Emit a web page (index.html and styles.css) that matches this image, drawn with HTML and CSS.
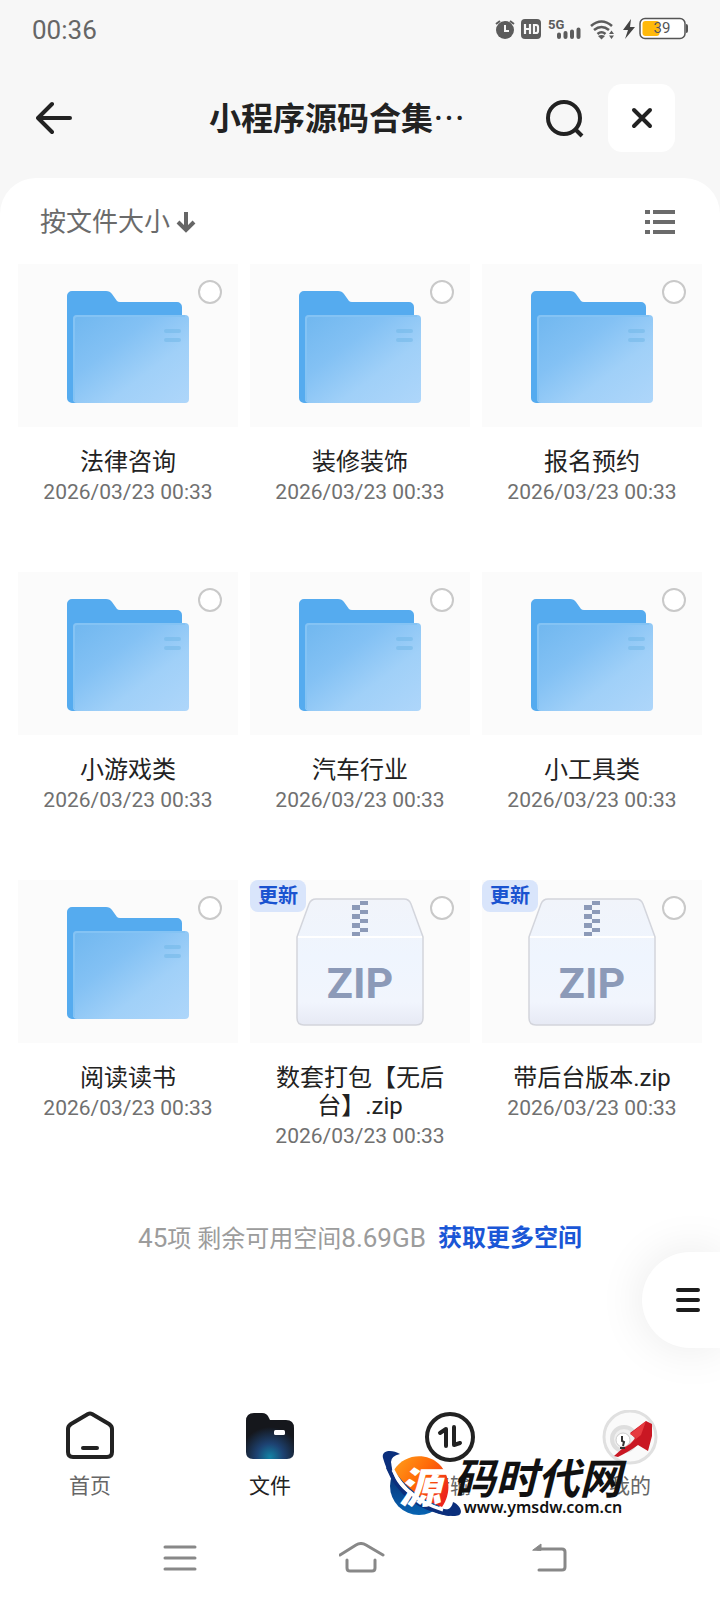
FILE: index.html
```html
<!DOCTYPE html>
<html lang="zh-CN">
<head>
<meta charset="utf-8">
<meta name="viewport" content="width=device-width">
<title>小程序源码合集</title>
<link rel="stylesheet" href="styles.css">
</head>
<body>
<svg class="defs" aria-hidden="true">
  <defs>
    <linearGradient id="front" x1="0" y1="0" x2="1" y2="1">
      <stop offset="0" stop-color="#70b7ef"/><stop offset=".35" stop-color="#83c1f4"/><stop offset=".65" stop-color="#a0d0f8"/><stop offset="1" stop-color="#aed6fa"/>
    </linearGradient>
    <linearGradient id="box" x1="0" y1="0" x2="0" y2="1">
      <stop offset="0" stop-color="#f1f4fa"/><stop offset=".45" stop-color="#eff5fe"/><stop offset=".82" stop-color="#f1f5fd"/><stop offset="1" stop-color="#e6e9f4"/>
    </linearGradient>
    <symbol id="folder" viewBox="0 0 128 128">
      <path d="M3 14a5 5 0 0 1 5-5h34q4 0 6 3l5 7q1 1 3 1h57a5 5 0 0 1 5 5v30H20v66H8a5 5 0 0 1-5-5z" fill="#55abef"/>
      <rect x="9" y="33" width="116" height="88" rx="4" fill="url(#front)"/>
      <path d="M10 119V37q0-3 3-3h108" fill="none" stroke="#84c3f4" stroke-width="2"/>
      <path d="M102 49h13M102 58h13" stroke="#72b8e8" stroke-width="4" stroke-linecap="round" opacity=".55"/>
    </symbol>
    <symbol id="zip" viewBox="0 0 128 128">
      <path d="M1 39 13 6q2-5 7-5h88q5 0 7 5l12 33v81q0 7-7 7H8q-7 0-7-7z" fill="url(#box)" stroke="#d3d5dc" stroke-width="1.5"/>
      <path d="M2 39h124" stroke="#fff" stroke-width="2"/>
      <path d="M64 3h8v4h-8zM56 7h8v5h-8zM64 12h8v4h-8zM56 16h8v5h-8zM64 21h8v4h-8zM56 25h8v5h-8zM64 30h8v4h-8zM56 34h8v4h-8z" fill="#8c9ab8"/>
      <text x="64" y="100" text-anchor="middle" class="zip-text">ZIP</text>
    </symbol>
  </defs>
</svg>

<div class="status">
  <time class="clock">00:36</time>
  <svg class="status-icons" viewBox="0 0 220 40" aria-hidden="true">
    <circle cx="25" cy="20" r="9" fill="#5c5c5c"/>
    <path d="m16 14 4-3M34 14l-4-3" stroke="#5c5c5c" stroke-width="2"/>
    <path d="M25 15v6h4" fill="none" stroke="#f7f7f7" stroke-width="2"/>
    <rect x="41" y="9" width="20" height="20" rx="4" fill="#5c5c5c"/>
    <path d="M45 14v10M50 14v10M45 19h5M54 15h2q2 0 2 2v4q0 2-2 2h-2z" fill="none" stroke="#f7f7f7" stroke-width="2.2"/>
    <text x="68" y="19" class="net">5G</text>
    <path d="M79 24.500v2.500M85.500 23v4M92 21.500v5.500M98.500 19.500v7.500" stroke="#5c5c5c" stroke-width="4" stroke-linecap="round"/>
    <path d="M111 16q10.500-9 21 0M114 20q7.500-6 15 0M117.500 24q4-3.500 8 0" fill="none" stroke="#5c5c5c" stroke-width="2.600"/>
    <path d="m118 26 3.500 3.500L125 26q-3.500-2-7 0z" fill="#5c5c5c"/>
    <path d="m129 24 2.500-3.500L134 24zM129 25.500h5l-2.500 3.500z" fill="#5c5c5c"/>
    <path d="m151 9-8 11h5l-3 9 10-12h-5z" fill="#444"/>
    <rect x="160" y="8.500" width="45" height="20" rx="5" fill="#fff" stroke="#555" stroke-width="1.500"/>
    <rect x="162.500" y="11" width="17" height="15" rx="3" fill="#ffb90a"/>
    <path d="M206 14q2 0 2 2v5q0 2-2 2z" fill="#555"/>
    <text x="182" y="23" text-anchor="middle" class="battery">39</text>
  </svg>
</div>

<header class="header">
  <button class="icon-button" type="button" aria-label="返回">
    <svg width="36" height="36" viewBox="0 0 36 36" fill="none" stroke="#222" stroke-width="4" stroke-linecap="round" stroke-linejoin="round"><path d="M34 18H2M16 4 2 18l14 14"/></svg>
  </button>
  <h1 class="title">小程序源码合集<span class="dots">⋯</span></h1>
  <button class="icon-button" type="button" aria-label="搜索">
    <svg width="40" height="40" viewBox="0 0 40 40" fill="none" stroke="#222" stroke-width="4"><circle cx="18" cy="20" r="16"/><path d="m29 31 7 7"/></svg>
  </button>
  <button class="close" type="button" aria-label="关闭">
    <svg width="24" height="24" viewBox="0 0 24 24" fill="none" stroke="#222" stroke-width="4" stroke-linecap="round"><path d="m4 4 16 16M20 4 4 20"/></svg>
  </button>
</header>

<main class="panel">
  <div class="toolbar">
    <button class="sort" type="button">按文件大小
      <svg width="20" height="22" viewBox="0 0 20 22" fill="none" stroke="#666" stroke-width="4"><path d="M10 1v17M2 11l8 8 8-8"/></svg>
    </button>
    <button class="icon-button" type="button" aria-label="列表视图">
      <svg width="30" height="24" viewBox="0 0 30 24" stroke="#6b6b6b" stroke-width="4"><path d="M0 2h5M8 2h22M0 12h5M8 12h22M0 22h5M8 22h22"/></svg>
    </button>
  </div>

  <div class="grid">
    <article class="item"><div class="tile"><svg class="art" aria-hidden="true"><use href="#folder"/></svg><input class="pick" type="checkbox" aria-labelledby="n1"></div><h2 class="name" id="n1">法律咨询</h2><time class="date">2026/03/23 00:33</time></article>
    <article class="item"><div class="tile"><svg class="art" aria-hidden="true"><use href="#folder"/></svg><input class="pick" type="checkbox" aria-labelledby="n2"></div><h2 class="name" id="n2">装修装饰</h2><time class="date">2026/03/23 00:33</time></article>
    <article class="item"><div class="tile"><svg class="art" aria-hidden="true"><use href="#folder"/></svg><input class="pick" type="checkbox" aria-labelledby="n3"></div><h2 class="name" id="n3">报名预约</h2><time class="date">2026/03/23 00:33</time></article>
    <article class="item"><div class="tile"><svg class="art" aria-hidden="true"><use href="#folder"/></svg><input class="pick" type="checkbox" aria-labelledby="n4"></div><h2 class="name" id="n4">小游戏类</h2><time class="date">2026/03/23 00:33</time></article>
    <article class="item"><div class="tile"><svg class="art" aria-hidden="true"><use href="#folder"/></svg><input class="pick" type="checkbox" aria-labelledby="n5"></div><h2 class="name" id="n5">汽车行业</h2><time class="date">2026/03/23 00:33</time></article>
    <article class="item"><div class="tile"><svg class="art" aria-hidden="true"><use href="#folder"/></svg><input class="pick" type="checkbox" aria-labelledby="n6"></div><h2 class="name" id="n6">小工具类</h2><time class="date">2026/03/23 00:33</time></article>
    <article class="item"><div class="tile"><svg class="art" aria-hidden="true"><use href="#folder"/></svg><input class="pick" type="checkbox" aria-labelledby="n7"></div><h2 class="name" id="n7">阅读读书</h2><time class="date">2026/03/23 00:33</time></article>
    <article class="item"><div class="tile"><svg class="art" aria-hidden="true"><use href="#zip"/></svg><span class="tag">更新</span><input class="pick" type="checkbox" aria-labelledby="n8"></div><h2 class="name" id="n8">数套打包【无后台】.zip</h2><time class="date">2026/03/23 00:33</time></article>
    <article class="item"><div class="tile"><svg class="art" aria-hidden="true"><use href="#zip"/></svg><span class="tag">更新</span><input class="pick" type="checkbox" aria-labelledby="n9"></div><h2 class="name" id="n9">带后台版本.zip</h2><time class="date">2026/03/23 00:33</time></article>
  </div>

  <p class="summary"><span><span class="num">45</span>项 剩余可用空间<span class="num">8.69GB</span></span><a class="more" href="#">获取更多空间</a></p>
</main>

<div class="bottom">
  <button class="float" type="button" aria-label="菜单">
    <svg width="24" height="26" viewBox="0 0 24 26" stroke="#1c1c1c" stroke-width="4" stroke-linecap="round"><path d="M2 3h20M2 13h20M2 23h20"/></svg>
  </button>

  <nav class="tabs">
    <a class="tab" href="#">
      <svg width="56" height="56" viewBox="0 0 56 56" fill="none" stroke="#222" stroke-width="4" stroke-linejoin="round" stroke-linecap="round"><path d="M26 4q2-1 4 0l17 10q3 2 3 5v23q0 5-5 5H11q-5 0-5-5V19q0-3 3-5z"/><path d="M21 38h14"/></svg>
      <span>首页</span>
    </a>
    <a class="tab active" href="#" aria-current="page">
      <svg width="56" height="56" viewBox="0 0 56 56"><defs><radialGradient id="glow" gradientUnits="userSpaceOnUse" cx="28" cy="47" r="30"><stop offset="0" stop-color="#1383a5"/><stop offset=".45" stop-color="#1d4272"/><stop offset="1" stop-color="#15171c"/></radialGradient></defs><path d="M4 11q0-8 8-8h8q5 0 7 5l1 2h16q8 0 8 8v24q0 7-7 7H11q-7 0-7-7z" fill="url(#glow)"/><rect x="32" y="20" width="11" height="5" rx="1.500" fill="#fff"/></svg>
      <span>文件</span>
    </a>
    <a class="tab" href="#">
      <svg width="56" height="56" viewBox="0 0 56 56" fill="none" stroke="#222" stroke-width="4"><circle cx="28" cy="27" r="23"/><path d="M24 36V19l-6 4M32 17v18l6-2" stroke-linecap="round" stroke-linejoin="round"/></svg>
      <span>传输</span>
    </a>
    <a class="tab" href="#">
      <svg width="56" height="56" viewBox="0 0 56 56"><circle cx="28" cy="27" r="26" fill="#fafafa" stroke="#e0e0e0" stroke-width="3"/><circle cx="22" cy="29" r="12" fill="#f0f0f0" stroke="#dedede" stroke-width="4"/><circle cx="21" cy="30" r="7" fill="#fff" stroke="#ccc"/><path d="M44 11l6 3v12l-4 15-10-6q-8 6-20 12l-4-1 9-8q9-4 12-10l-5-5z" fill="#c91723"/><path d="M44 11 28 24l6 4-9 8 14-11z" fill="#e63a3f"/><path d="M20 26v5l2 1-1 4M18 38h5" fill="none" stroke="#333" stroke-width="2"/></svg>
      <span>我的</span>
    </a>
  </nav>

  <div class="mark">
    <svg class="orb" viewBox="0 0 80 68">
      <defs>
        <linearGradient id="fire" x1="0" y1="0" x2="1" y2=".7"><stop offset="0" stop-color="#ffa01c"/><stop offset=".5" stop-color="#ff6a08"/><stop offset="1" stop-color="#ed251b"/></linearGradient>
        <linearGradient id="sea" x1="0" y1="0" x2="0" y2="1"><stop offset="0" stop-color="#071c5c"/><stop offset="1" stop-color="#0864b2"/></linearGradient>
      </defs>
      <circle cx="37" cy="36" r="29" fill="url(#sea)"/>
      <path d="M12 20C22 4 44 2 57 14c12 12 12 30 3 43C40 50 23 37 12 20z" fill="url(#fire)"/>
      <path d="M8 16q14 33 54 45" fill="none" stroke="#fff" stroke-width="4"/>
      <path d="M18 4C10-1-1 0 1 8c4 14 8 18 12 22Q9 20 9 12q0-6 9-8zM71 52c8 3 12 14 2 14-10 1-24-5-34-11 16 6 30 9 32-3z" fill="#0b2f7c"/>
      <path d="M9 12q2 36 58 48l6 2-6 4Q20 58 4 18z" fill="#0b2f7c"/>
      <path d="M11 20q14 29 50 40" fill="none" stroke="#fff" stroke-width="3"/>
      <text x="38" y="53" text-anchor="middle" class="orb-text">源</text>
    </svg>
    <div class="mark-words">
      <span class="brand">码时代网</span>
      <span class="site">www.ymsdw.com.cn</span>
    </div>
  </div>

  <div class="system">
    <button class="icon-button" type="button" aria-label="最近任务"><svg width="48" height="32" viewBox="0 0 48 32" fill="none" stroke="#888" stroke-width="3" stroke-linecap="round"><path d="M9 5h30M9 16h30M9 27h30"/></svg></button>
    <button class="icon-button" type="button" aria-label="主屏幕"><svg width="48" height="32" viewBox="0 0 48 32" fill="none" stroke="#888" stroke-width="3" stroke-linecap="round" stroke-linejoin="round"><path d="M1 13 17 3q5-3 10 0l17 10M8 18v8q0 3 3 3h22q3 0 3-3v-8"/></svg></button>
    <button class="icon-button" type="button" aria-label="后退"><svg width="48" height="32" viewBox="0 0 48 32" fill="none" stroke="#888" stroke-width="3" stroke-linecap="round" stroke-linejoin="round"><path d="M16 7h24q3 0 3 3v15q0 3-3 3H17"/><path d="m11 8 8-6v6z" fill="#888" stroke-width="1"/></svg></button>
  </div>
</div>
</body>
</html>
```
FILE: styles.css
```css
* { box-sizing: border-box; }
body {
  margin: 0;
  min-height: 100vh;
  display: flex;
  flex-direction: column;
  background: #f7f7f7;
  color: #222;
  font-family: Roboto, "Noto Sans CJK SC", sans-serif;
}
button { border: 0; padding: 0; background: none; font: inherit; color: inherit; }
svg { display: block; }
h1, h2, p { margin: 0; }
a { color: inherit; text-decoration: none; }
.defs { position: absolute; width: 0; height: 0; }
.zip-text { font: 700 43px "Liberation Sans Narrow", Roboto, sans-serif; fill: #8c9ab8; }

.status {
  display: flex;
  justify-content: space-between;
  align-items: flex-start;
  height: 58px;
  padding: 10px 20px 0 32px;
}
.clock { font-size: 26px; line-height: 40px; color: #666; }
.status-icons { width: 220px; height: 40px; }
.net { font: 700 13px Roboto, sans-serif; fill: #5c5c5c; }
.battery { font: 15px Roboto, sans-serif; fill: #555; }

.header {
  display: flex;
  align-items: center;
  padding: 26px 45px 26px 36px;
}
.title {
  flex: 1;
  min-width: 0;
  padding: 0 0 4px 56px;
  font: 700 32px/40px "Noto Sans CJK SC", sans-serif;
  text-align: center;
  white-space: nowrap;
}
.dots { font-weight: 400; }
.close {
  display: grid;
  place-items: center;
  width: 67px;
  height: 68px;
  margin-left: 22px;
  border-radius: 14px;
  background: #fff;
}

.panel {
  flex: 1;
  background: #fff;
  border-radius: 36px 36px 0 0;
}
.toolbar {
  display: flex;
  justify-content: space-between;
  align-items: center;
  padding: 27px 45px 25px 40px;
}
.sort {
  display: flex;
  align-items: center;
  gap: 6px;
  font-size: 26px;
  line-height: 34px;
  color: #6b6b6b;
}
.grid {
  display: grid;
  grid-template-columns: repeat(3, minmax(0, 1fr));
  gap: 64px 12px;
  padding: 0 18px;
}
.item {
  display: flex;
  flex-direction: column;
  align-items: center;
}
.tile {
  position: relative;
  display: grid;
  place-items: center;
  width: 100%;
  height: 163px;
  margin-bottom: 21px;
  background: #fbfbfb;
}
.art { width: 128px; height: 128px; }
.pick {
  position: absolute;
  top: 16px;
  right: 16px;
  width: 24px;
  height: 24px;
  margin: 0;
  appearance: none;
  border: 2px solid #c9c9c9;
  border-radius: 50%;
  background: #fff;
}
.pick:checked { border-color: #1a56d6; background: #1a56d6; }
.tag {
  position: absolute;
  top: 0;
  left: 0;
  padding: 0 8px;
  border-radius: 8px;
  background: #d9e5fb;
  color: #1a53d0;
  font-size: 20px;
  font-weight: 700;
  line-height: 32px;
}
.name {
  max-width: 180px;
  font-size: 24px;
  font-weight: 400;
  line-height: 28px;
  text-align: center;
}
.date { font-size: 21px; line-height: 32px; color: #707070; }

.summary {
  display: flex;
  justify-content: center;
  gap: 12px;
  padding: 72px 0 40px;
  font-size: 24px;
  line-height: 28px;
  color: #9c9c9c;
}
.num { font-size: 26px; }
.more { color: #1a56d6; font-weight: 700; }

.bottom { position: relative; background: #fff; }
.float {
  position: absolute;
  right: 0;
  bottom: 252px;
  width: 78px;
  height: 96px;
  padding-left: 34px;
  border-radius: 48px 0 0 48px;
  background: #fff;
  box-shadow: 0 0 48px rgba(0, 0, 0, 0.09);
}
.tabs {
  display: grid;
  grid-template-columns: repeat(4, 1fr);
  padding-bottom: 16px;
}
.tab {
  display: flex;
  flex-direction: column;
  align-items: center;
  gap: 6px;
  font-size: 21px;
  line-height: 28px;
  color: #666;
}
.active { color: #222; }

.mark {
  position: absolute;
  left: 53%;
  bottom: 82px;
  display: flex;
  align-items: flex-end;
  color: #111;
}
.orb { width: 80px; height: 68px; }
.orb-text { font: italic 900 42px "Noto Sans CJK SC", sans-serif; fill: #fff; }
.mark-words {
  display: flex;
  flex-direction: column;
  margin-left: -8px;
  white-space: nowrap;
}
.brand { font: italic 700 42px/40px "Noto Sans CJK SC", sans-serif; }
.site { padding-left: 10px; font: 600 16px/22px "Noto Sans", sans-serif; }

.system {
  display: flex;
  justify-content: space-between;
  padding: 26px 150px 26px 156px;
}
```
